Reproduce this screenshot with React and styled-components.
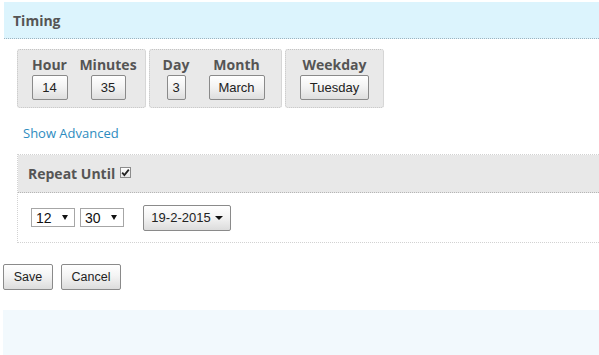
import React from "react";
import styled, { createGlobalStyle } from "styled-components";

const GlobalStyle = createGlobalStyle`
  body {
    margin: 0;
    background: #fff;
    overflow: hidden;
  }
`;

const Page = styled.div`
  width: 599px;
  padding: 2px 0 0 3px;
  box-sizing: border-box;
  overflow: hidden;
`;

const TitleBar = styled.div`
  margin-left: 1px;
  height: 36px;
  background: #dcf4fd;
  border-bottom: 1px dotted #9db3c0;
  padding-left: 9px;
  display: flex;
  align-items: center;
  font-family: "Open Sans", sans-serif;
  font-weight: 700;
  font-size: 14px;
  color: #555;
`;

const TimingBody = styled.div`
  padding: 10px 0 0 14px;
`;

const GroupRow = styled.div`
  display: flex;
  gap: 3px;
`;

const Group = styled.div`
  display: flex;
  padding: 6px 5px 7px;
  background: #e9e9e9;
  border: 1px dotted #c4c4c4;
  border-radius: 3px;
`;

const Field = styled.div`
  width: ${(p) => p.$w}px;
  display: flex;
  flex-direction: column;
  align-items: center;
`;

const FieldLabel = styled.div`
  font-family: "Open Sans", sans-serif;
  font-weight: 700;
  font-size: 14px;
  line-height: 18px;
  color: #555;
`;

const ValueButton = styled.button`
  margin-top: 1px;
  height: 25px;
  width: ${(p) => p.$w}px;
  padding: 0;
  border: 1px solid #8a8a8a;
  border-radius: 2px;
  background: linear-gradient(#ffffff, #f4f4f4 45%, #dedede);
  font-family: "Liberation Sans", Arial, sans-serif;
  font-size: 13px;
  color: #222;
`;

const AdvancedLink = styled.a`
  display: block;
  margin: 16px 0 0 20px;
  font-family: "Open Sans", sans-serif;
  font-size: 13px;
  line-height: 18px;
  color: #2e8cc0;
  text-decoration: none;
`;

const RepeatSection = styled.div`
  margin: 12px -20px 0 14px;
  border: 1px dotted #d2d2d2;
  border-right: none;
`;

const RepeatHeader = styled.div`
  height: 37px;
  background: #e8e8e8;
  border-bottom: 1px dotted #b5b5b5;
  padding-left: 10px;
  display: flex;
  align-items: center;
  gap: 5px;
  font-family: "Open Sans", sans-serif;
  font-weight: 700;
  font-size: 14px;
  color: #555;
`;

const CheckBox = styled.span`
  width: 11px;
  height: 11px;
  box-sizing: border-box;
  border: 1px solid #8c8c8c;
  background: linear-gradient(#fdfdfd, #e6e6e6);
  display: flex;
  align-items: center;
  justify-content: center;
  margin-top: -3px;
`;

const RepeatBody = styled.div`
  height: 49px;
  padding-left: 13px;
  display: flex;
  align-items: center;
`;

const Select = styled.div`
  width: ${(p) => p.$w}px;
  height: 19px;
  box-sizing: border-box;
  margin-right: ${(p) => p.$mr}px;
  border: 1px solid #a6a6a6;
  background: #fff;
  display: flex;
  align-items: center;
  justify-content: space-between;
  padding: 0 6px 0 4px;
  font-family: "Liberation Sans", Arial, sans-serif;
  font-size: 14px;
  color: #111;
`;

const DownArrow = styled.span`
  width: 0;
  height: 0;
  border-left: ${(p) => p.$s}px solid transparent;
  border-right: ${(p) => p.$s}px solid transparent;
  border-top: ${(p) => p.$h}px solid #111;
  margin-left: ${(p) => p.$ml || 0}px;
`;

const DateButton = styled.button`
  width: 88px;
  height: 26px;
  padding: 0;
  border: 1px solid #8a8a8a;
  border-radius: 2px;
  background: linear-gradient(#ffffff, #f4f4f4 45%, #dcdcdc);
  display: flex;
  align-items: center;
  justify-content: center;
  font-family: "Liberation Sans", Arial, sans-serif;
  font-size: 13px;
  color: #222;
`;

const Actions = styled.div`
  margin-top: 21px;
  display: flex;
  gap: 8px;
`;

const ActionButton = styled.button`
  width: ${(p) => p.$w}px;
  height: 26px;
  padding: 0;
  border: 1px solid #8a8a8a;
  border-radius: 2px;
  background: linear-gradient(#ffffff, #f4f4f4 45%, #dcdcdc);
  font-family: "Liberation Sans", Arial, sans-serif;
  font-size: 12.5px;
  color: #222;
`;

const BottomBar = styled.div`
  margin-top: 20px;
  height: 45px;
  background: #f2f9fd;
`;

export default function App() {
  return (
    <Page>
      <GlobalStyle />
      <TitleBar>Timing</TitleBar>
      <TimingBody>
        <GroupRow>
          <Group>
            <Field $w={53}>
              <FieldLabel>Hour</FieldLabel>
              <ValueButton $w={36}>14</ValueButton>
            </Field>
            <Field $w={64}>
              <FieldLabel>Minutes</FieldLabel>
              <ValueButton $w={35}>35</ValueButton>
            </Field>
          </Group>
          <Group>
            <Field $w={42}>
              <FieldLabel>Day</FieldLabel>
              <ValueButton $w={19}>3</ValueButton>
            </Field>
            <Field $w={79}>
              <FieldLabel>Month</FieldLabel>
              <ValueButton $w={56}>March</ValueButton>
            </Field>
          </Group>
          <Group>
            <Field $w={87}>
              <FieldLabel>Weekday</FieldLabel>
              <ValueButton $w={69}>Tuesday</ValueButton>
            </Field>
          </Group>
        </GroupRow>
      </TimingBody>
      <AdvancedLink href="#">Show Advanced</AdvancedLink>
      <RepeatSection>
        <RepeatHeader>
          Repeat Until
          <CheckBox>
            <svg width="9" height="9" viewBox="0 0 9 9">
              <path d="M1.2 4.6 L3.4 7 L7.8 1.6" fill="none" stroke="#222" strokeWidth="1.8" />
            </svg>
          </CheckBox>
        </RepeatHeader>
        <RepeatBody>
          <Select $w={44} $mr={5}>
            12
            <DownArrow $s={3} $h={5} />
          </Select>
          <Select $w={44} $mr={19}>
            30
            <DownArrow $s={3} $h={5} />
          </Select>
          <DateButton>
            19-2-2015
            <DownArrow $s={4} $h={4} $ml={4} />
          </DateButton>
        </RepeatBody>
      </RepeatSection>
      <Actions>
        <ActionButton $w={50}>Save</ActionButton>
        <ActionButton $w={60}>Cancel</ActionButton>
      </Actions>
      <BottomBar />
    </Page>
  );
}
